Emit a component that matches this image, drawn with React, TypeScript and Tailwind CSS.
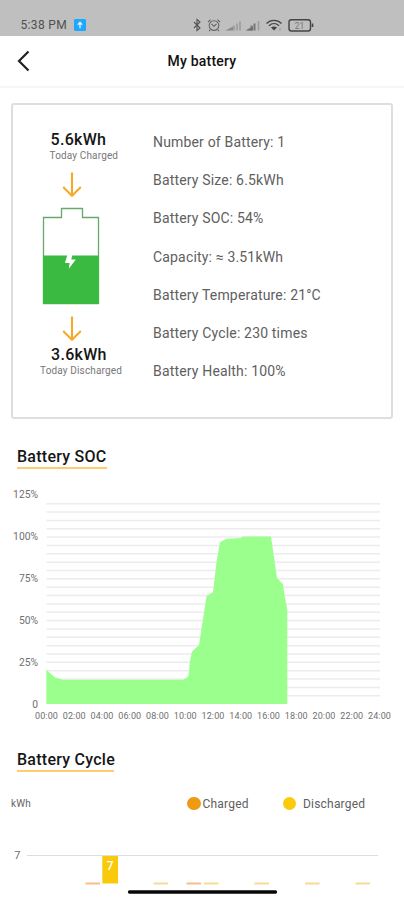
import React from 'react';

const stats = [
  'Number of Battery: 1',
  'Battery Size: 6.5kWh',
  'Battery SOC: 54%',
  'Capacity: ≈ 3.51kWh',
  'Battery Temperature: 21°C',
  'Battery Cycle: 230 times',
  'Battery Health: 100%',
];

const socTicks = [
  { label: '125%', y: 15.5 },
  { label: '100%', y: 57.5 },
  { label: '75%', y: 99.5 },
  { label: '50%', y: 141 },
  { label: '25%', y: 183 },
  { label: '0', y: 225 },
];

const hours = ['00:00', '02:00', '04:00', '06:00', '08:00', '10:00', '12:00', '14:00', '16:00', '18:00', '20:00', '22:00', '24:00'];

const socArea =
  'M46.3 224 V189.5 L50 193 L55 197.5 L63 199.7 H183 L187 197.5 L188.5 196 L190 181 L192 171.5 L199 165 L206.5 116 L213 112 L216.5 82 L220 62 L227 58.7 L241 58 L243 56.5 H271 L277 98 L283 104 L284 112 L287.3 130 V224 Z';

const cycleDashes = [
  { x: 85.5, color: '#f5bd8c' },
  { x: 153.5, color: '#fbd992' },
  { x: 186.5, color: '#f5bd8c' },
  { x: 204, color: '#fbd992' },
  { x: 254.5, color: '#fbd992' },
  { x: 305, color: '#fbd992' },
  { x: 355.5, color: '#fbd992' },
];

const StatusBar = () => (
  <div className="flex h-[35.5px] items-end bg-[#bfbfbf] pb-[3px] pl-[20.5px] text-[#505050]">
    <span className="w-[53.5px] text-[12px] leading-4 tracking-[0.35px] whitespace-nowrap">5:38 PM</span>
    <svg className="mb-[1.5px]" width="12" height="12" viewBox="0 0 12 12">
      <rect width="12" height="12" rx="1.5" fill="#1ea7fb" />
      <path d="M6 9.3V4M3.8 5.8L6 3.3l2.2 2.5" fill="none" stroke="#d9f1ff" strokeWidth="1.4" />
    </svg>
    <svg className="ml-[106px]" width="124" height="16" viewBox="0 0 124 16" fill="none">
      <path d="M2 5L8 11L5 13.5V2.5L8 5L2 11" stroke="#555" strokeWidth="1.1" />
      <g stroke="#666" strokeWidth="1.1">
        <circle cx="22" cy="8.6" r="4.8" />
        <path d="M16 5L18.6 2.6M28 5L25.4 2.6M19.5 7L22 9.3L24.5 7M18 13L17 14M26 13L27 14" />
      </g>
      <path d="M33.500 13.500L41 9.500V13.500Z" fill="#888" />
      <path d="M53.500 13.500L61 9.500V13.500Z" fill="#666" />
      <g strokeWidth="2">
        <path d="M42 13.500V8.500M45 13.500V6.500M48 13.500V4.500" stroke="#a2a2a2" />
        <path d="M59.500 13.500V8.500M62.500 13.500V6.500" stroke="#777" />
        <path d="M66.500 13.500V4" stroke="#999" strokeWidth="1.500" />
      </g>
      <g stroke="#444" strokeWidth="1.3">
        <path d="M74.5 6.500C78.500 2.300 85.500 2.300 89.500 6.500M77 8.700C80 5.800 84 5.800 87 8.700" />
        <path d="M79 10.500Q82 8.500 85 10.500L82 13.500Z" fill="#444" stroke="none" />
        <path d="M88 11v3" stroke="#999" strokeWidth="1" />
      </g>
      <rect x="97" y="2.700" width="21.500" height="11.300" rx="2.500" stroke="#444" strokeWidth="1.4" />
      <path d="M120.500 6.500v3.500" stroke="#444" strokeWidth="1.6" />
      <text x="107.500" y="11.500" textAnchor="middle" fontSize="8.500" fill="#777">21</text>
    </svg>
  </div>
);

const DownArrow = () => (
  <svg width="20" height="26" viewBox="0 0 20 26" fill="none" stroke="#f3aa2b" strokeWidth="2.100">
    <path d="M10 0.500V24M1.200 15L10 23.800L18.800 15" />
  </svg>
);

const BatteryIcon = () => (
  <svg width="58" height="98" viewBox="0 0 58 98">
    <path d="M1.500 96.500V10.500H19.500V1.500H40.500V10.500H56.500V96.500Z" fill="#fff" stroke="#67a86d" strokeWidth="1.3" />
    <path d="M1 48.500H57V97H1Z" fill="#3aba40" />
    <path d="M25.500 47.300h5l-1.200 5.200h4.500l-7 9.300l0.700-5.800h-4.500Z" fill="#fff" />
  </svg>
);

const SectionTitle = ({ title, className }: { title: string; className: string }) => (
  <h2 className={`ml-[17px] border-b-[2.5px] border-[#ffcc70] text-[16px] leading-[21px] font-medium whitespace-nowrap text-[#161616] ${className}`}>
    {title}
  </h2>
);

const SocChart = () => (
  <svg className="mt-[11px] block" width="404" height="250" viewBox="0 0 404 250">
    {Array.from({ length: 24 }, (_, i) => (
      <path key={i} d={`M46.500 ${23.7 + i * 8.35}H380`} stroke="#ececec" strokeWidth="1.5" />
    ))}
    <path d={socArea} fill="#9bff8d" />
    {socTicks.map((tick) => (
      <text key={tick.label} x="38" y={tick.y + 2.7} textAnchor="end" fontSize="10.3" fill="#707070">
        {tick.label}
      </text>
    ))}
    {hours.map((hour, i) => (
      <text key={hour} x={46.5 + i * 27.75} y="239" textAnchor="middle" fontSize="9" letterSpacing="0.1" fill="#707070">
        {hour}
      </text>
    ))}
  </svg>
);

const CycleChart = () => (
  <svg className="block" width="404" height="57" viewBox="0 0 404 57">
    <path d="M27 12.500H378" stroke="#dedede" />
    <text x="20.500" y="16" textAnchor="end" fontSize="11" fill="#707070">7</text>
    <rect x="102.300" y="13" width="15.700" height="27.500" fill="#f9ca0c" />
    <text x="110.200" y="27" textAnchor="middle" fontSize="12" fontWeight="500" fill="#fff">7</text>
    {cycleDashes.map((dash) => (
      <path key={dash.x} d={`M${dash.x} 40.500h14.500`} stroke={dash.color} strokeWidth="2" />
    ))}
    <path d="M129.500 49H275.500" stroke="#080808" strokeWidth="3.300" strokeLinecap="round" />
  </svg>
);

const App = () => {
  return (
    <div className="h-[900px] w-[404px] overflow-hidden bg-white font-[Roboto,sans-serif]">
      <StatusBar />
      <header className="grid h-[52px] grid-cols-3 items-center border-b-2 border-[#f6f6f6]">
        <svg className="mt-px ml-[16.5px]" width="14" height="22" viewBox="0 0 14 22" fill="none">
          <path d="M11.500 1.500L2 11L11.500 20.500" stroke="#202020" strokeWidth="2.200" />
        </svg>
        <h1 className="pt-[2px] text-center text-[14px] font-medium tracking-[0.2px] whitespace-nowrap text-[#111]">My battery</h1>
      </header>

      <section className="mx-[11px] mt-[15.5px] flex h-[316px] rounded-[3px] border-2 border-[#dedede]">
        <div className="flex w-[140px] shrink-0 flex-col pt-[25px]">
          <p className="ml-[37.5px] text-[16px] leading-5 font-medium tracking-[0.3px] text-[#161616]">5.6kWh</p>
          <p className="ml-[36.500px] text-[10px] leading-3 tracking-[0.15px] whitespace-nowrap text-[#777]">Today Charged</p>
          <div className="mt-[10px] ml-[49px]"><DownArrow /></div>
          <div className="mt-[9px] ml-[29px]"><BatteryIcon /></div>
          <div className="mt-[11px] ml-[49px]"><DownArrow /></div>
          <p className="mt-[2.5px] ml-[38px] text-[16px] leading-5 font-medium tracking-[0.3px] text-[#161616]">3.6kWh</p>
          <p className="ml-[27px] text-[10px] leading-3 tracking-[0.15px] whitespace-nowrap text-[#777]">Today Discharged</p>
        </div>
        <ul className="pt-[18px] text-[14px] tracking-[0.17px] text-[#606060]">
          {stats.map((stat) => (
            <li key={stat} className="h-[38.2px] leading-[38.2px] whitespace-nowrap">{stat}</li>
          ))}
        </ul>
      </section>

      <SectionTitle title="Battery SOC" className="mt-[27px] w-[90px] tracking-[0.25px]" />
      <SocChart />
      <SectionTitle title="Battery Cycle" className="mt-[18.500px] w-[97px] tracking-[0.25px]" />

      <div className="mt-[22px] flex h-5 items-center pl-[11px] text-[12px] tracking-[0.2px] text-[#606060]">
        <span className="w-[176px] text-[10px] text-[#666]">kWh</span>
        <span className="size-[13.5px] rounded-full bg-[#ee9a13]" />
        <span className="ml-[2px] w-[80px]">Charged</span>
        <span className="size-[13.5px] rounded-full bg-[#fbca0b]" />
        <span className="ml-[7px]">Discharged</span>
      </div>
      <div className="mt-[29px]">
        <CycleChart />
      </div>
    </div>
  );
};

export default App;
